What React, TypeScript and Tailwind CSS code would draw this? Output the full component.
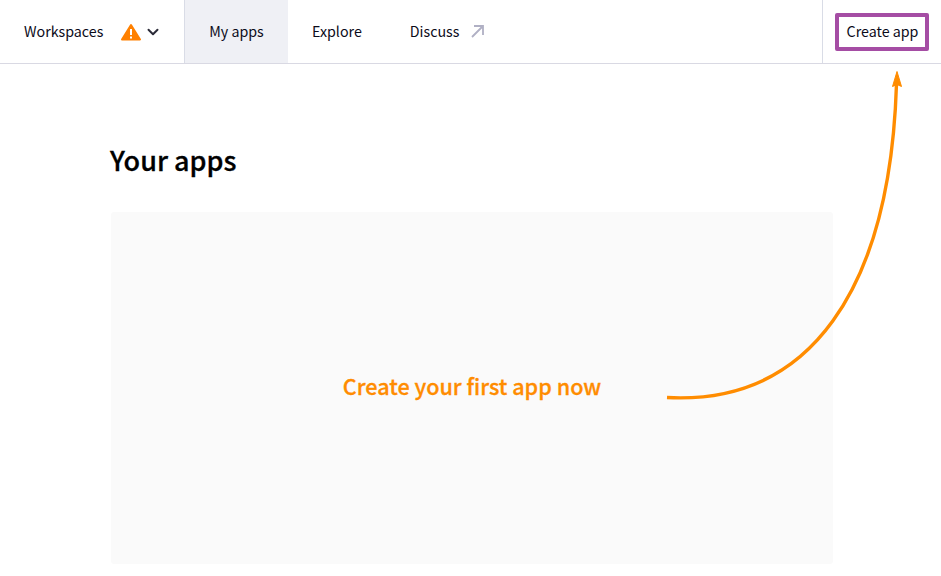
import React from "react";
import { ChevronDown } from "lucide-react";

export default function App() {
  return (
    <div className="relative h-[576px] w-[941px] overflow-hidden bg-white text-[#0b0b1a] [font-family:'Noto_Sans_CJK_SC','Noto_Sans',sans-serif]">
      <header className="flex h-16 items-stretch border-b border-[#d9d9e3] bg-white text-[14.25px] leading-5">
        <div className="flex w-[185px] items-center border-r border-[#d9dce6] pb-px pl-6">
          <span>Workspaces</span>
          <svg className="ml-[18px] mt-px" width="20" height="18" viewBox="0 0 20 18" aria-hidden="true">
            <path d="M10 2 L19 16.5 H1 Z" fill="#ff8000" stroke="#ff8000" strokeWidth="2" strokeLinejoin="round" />
            <rect x="9" y="6" width="2" height="6" fill="#fff" />
            <rect x="9" y="13.5" width="2" height="2" fill="#fff" />
          </svg>
          <ChevronDown className="ml-[3px] mt-px text-[#2b2b38]" size={18} strokeWidth={2.6} />
        </div>
        <div className="flex w-[103px] items-center justify-center bg-[#eff0f5] pb-px">My apps</div>
        <div className="flex items-center pb-px pl-6">Explore</div>
        <div className="flex items-center pb-px pl-12">
          <span>Discuss</span>
          <svg className="ml-3" width="13" height="13" viewBox="0 0 13 13" fill="none" stroke="#b0b0c4" strokeWidth="1.8" aria-hidden="true">
            <path d="M1 12 L12 1 M3 1 H12 V10" />
          </svg>
        </div>
        <div className="ml-auto flex w-[119px] items-center border-l border-[#d9dce6] pl-3">
          <button className="h-[38px] w-[94px] rounded-[2px] border-4 border-[#a54da4] bg-white pb-px pl-px text-center leading-none">Create app</button>
        </div>
      </header>
      <main className="pl-[110px] pt-[79px]">
        <h1 className="text-[27px] font-medium leading-[34px] text-black [-webkit-text-stroke:0.3px_#000]">Your apps</h1>
        <div className="ml-px mt-[35px] flex h-[352px] w-[722px] items-center justify-center rounded-[3px] bg-[#fafafa] pb-[4px] text-[21.6px] font-medium leading-7 text-[#ff8c00] [-webkit-text-stroke:0.3px_#ff8c00]">
          Create your first app now
        </div>
      </main>
      <svg className="pointer-events-none absolute left-0 top-0" width="941" height="576" viewBox="0 0 941 576" fill="none" aria-hidden="true">
        <path d="M667 397.5 C810 405 890 290 896.5 84" stroke="#ff8c00" strokeWidth="3.4" />
        <path d="M897 71.5 L901.5 86.5 L897 84.5 L892.5 86.5 Z" fill="#ff8c00" stroke="#ff8c00" strokeWidth="1" />
      </svg>
    </div>
  );
}
